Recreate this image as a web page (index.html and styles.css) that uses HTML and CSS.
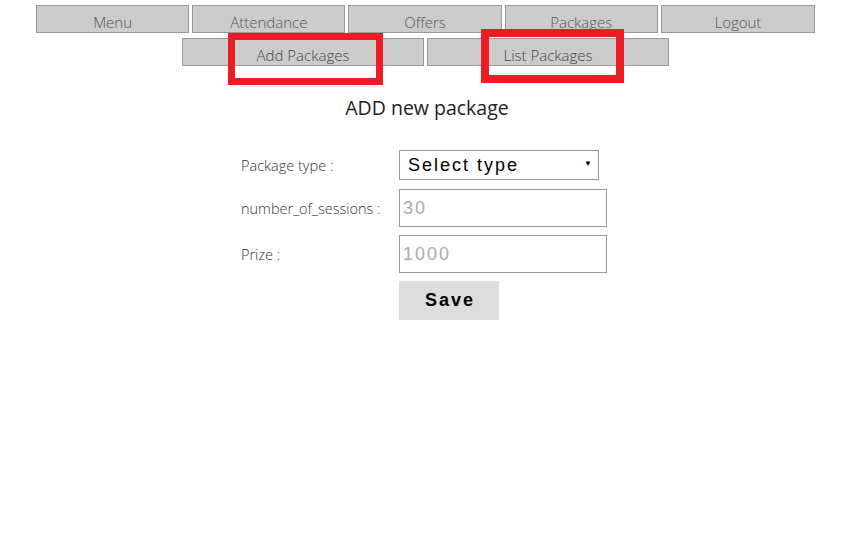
FILE: index.html
```html
<!DOCTYPE html>
<html>
<head>
<meta charset="utf-8">
<link rel="stylesheet" href="styles.css">
</head>
<body>
<div class="page">
  <nav class="nav-main">
    <a class="nav-btn">Menu</a>
    <a class="nav-btn">Attendance</a>
    <a class="nav-btn">Offers</a>
    <a class="nav-btn">Packages</a>
    <a class="nav-btn">Logout</a>
  </nav>
  <nav class="nav-sub">
    <a class="sub-btn">Add Packages</a>
    <a class="sub-btn">List Packages</a>
  </nav>
  <h1 class="title">ADD new package</h1>
  <form class="form">
    <label class="lbl">Package type :</label>
    <div class="select"><span>Select type</span><span class="arrow">▼</span></div>
    <label class="lbl">number_of_sessions :</label>
    <input class="field" type="text" placeholder="30">
    <label class="lbl">Prize :</label>
    <input class="field" type="text" placeholder="1000">
    <span></span>
    <button class="save" type="button">Save</button>
  </form>
  <div class="mark mark-add"></div>
  <div class="mark mark-list"></div>
</div>
</body>
</html>
```

FILE: styles.css
```css
html, body {
  margin: 0;
  padding: 0;
  background: #fff;
}
.page {
  position: relative;
  width: 779px;
  margin-left: 36px;
  padding-top: 5px;
  font-family: "Open Sans", "Segoe UI", sans-serif;
}
.nav-main {
  display: flex;
  gap: 3px;
}
.nav-btn {
  box-sizing: border-box;
  width: 154px;
  height: 28px;
  background: #cccccc;
  border: 1px solid #999;
  color: #555;
  font-size: 15px;
  font-weight: 300;
  text-align: center;
  line-height: 32px;
}
.nav-btn:last-child { width: 155px; }
.nav-sub {
  display: flex;
  justify-content: center;
  gap: 3px;
  margin-top: 5px;
}
.sub-btn {
  box-sizing: border-box;
  width: 242px;
  height: 28px;
  background: #cccccc;
  border: 1px solid #999;
  color: #444;
  font-size: 15px;
  font-weight: 300;
  text-align: center;
  line-height: 33px;
}
.title {
  margin: 29px 0 0;
  text-align: center;
  padding-left: 3px;
  font-size: 19.5px;
  font-weight: 400;
  color: #222;
  line-height: 26px;
}
.form {
  display: grid;
  grid-template-columns: 158px 208px;
  row-gap: 8px;
  margin: 29px 0 0 205px;
  align-items: center;
}
.lbl {
  font-size: 14.5px;
  font-weight: 300;
  color: #333;
}
.select {
  box-sizing: border-box;
  width: 200px;
  height: 30px;
  border: 1px solid #999;
  display: flex;
  justify-content: space-between;
  align-items: center;
  padding: 0 6px 0 8px;
  font-family: "Liberation Sans", Arial, sans-serif;
  font-size: 18px;
  letter-spacing: 2px;
  color: #000;
  margin-bottom: 1px;
}
.arrow {
  font-size: 8px;
  letter-spacing: 0;
  margin-top: -3px;
}
.field {
  box-sizing: border-box;
  width: 208px;
  height: 38px;
  margin: 0;
  border: 1px solid #999;
  padding: 0 3px;
  font-family: "Liberation Sans", Arial, sans-serif;
  font-size: 18px;
  letter-spacing: 2px;
  outline: none;
}
.field::placeholder { color: #aaa; }
.save {
  width: 100px;
  height: 39px;
  border: none;
  background: #dddddd;
  font-family: "Liberation Sans", Arial, sans-serif;
  font-size: 18px;
  font-weight: bold;
  letter-spacing: 2px;
  color: #000;
  padding: 0 0 0 2px;
}
.mark {
  position: absolute;
  box-sizing: border-box;
  border: 7px solid #ed1c24;
}
.mark-add {
  left: 192px;
  top: 33px;
  width: 155px;
  height: 52px;
}
.mark-list {
  left: 445px;
  top: 29px;
  width: 143px;
  height: 54px;
  border-width: 8px;
}
```
